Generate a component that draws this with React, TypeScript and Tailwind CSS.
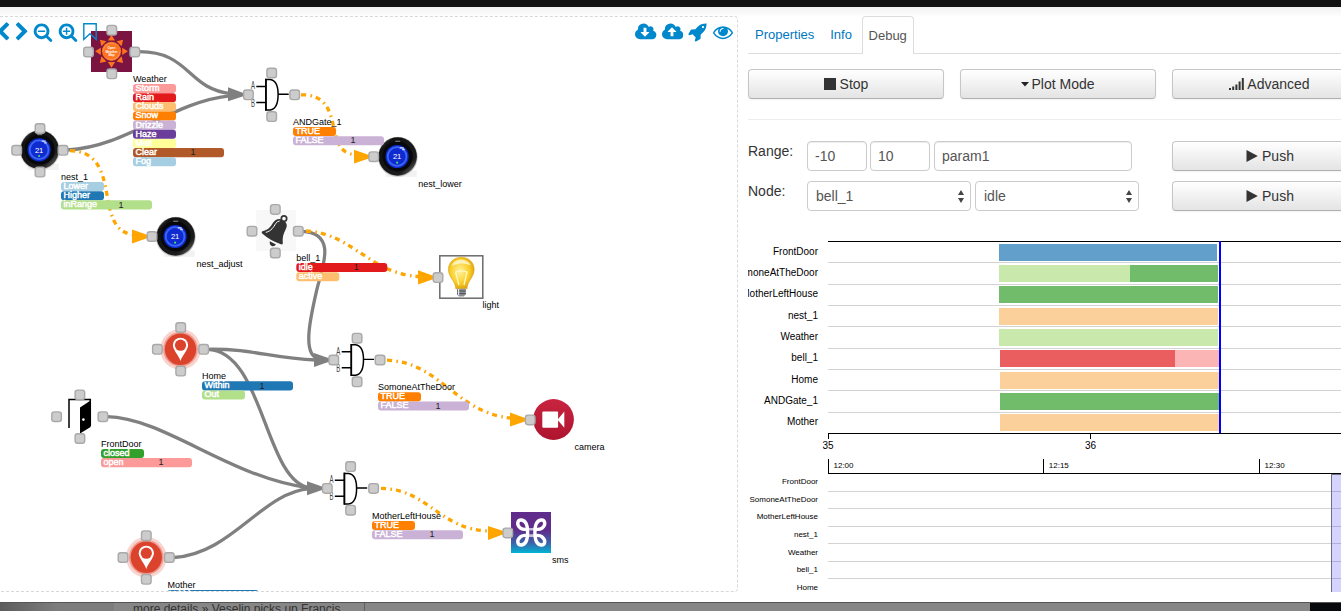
import React from "react";

const FONT = "font-['Liberation_Sans',Arial,sans-serif]";

/* ---------- toolbar glyphs ---------- */

const GLYPHS = {
  left: "M1427 301l-531 531 531 531q19 19 19 45t-19 45l-166 166q-19 19-45 19t-45-19l-742-742q-19-19-19-45t19-45l742-742q19-19 45-19t45 19l166 166q19 19 19 45t-19 45z",
  right: "M1363 877l-742 742q-19 19-45 19t-45-19l-166-166q-19-19-19-45t19-45l531-531-531-531q-19-19-19-45t19-45l166-166q19-19 45-19t45 19l742 742q19 19 19 45t-19 45z",
  zoomOut:
    "M1088 800v64q0 13-9.5 22.5t-22.5 9.5h-576q-13 0-22.5-9.5t-9.5-22.5v-64q0-13 9.5-22.5t22.5-9.5h576q13 0 22.5 9.5t9.5 22.5zm128 32q0-185-131.5-316.5t-316.5-131.5-316.5 131.5-131.5 316.5 131.5 316.5 316.5 131.5 316.5-131.5 131.5-316.5zm512 832q0 53-37.5 90.5t-90.5 37.5q-54 0-90-38l-343-342q-179 124-399 124-143 0-273.5-55.5t-225-150-150-225-55.5-273.5 55.5-273.5 150-225 225-150 273.5-55.5 273.5 55.5 225 150 150 225 55.5 273.5q0 220-124 399l343 343q37 37 37 90z",
  zoomIn:
    "M1088 800v64q0 13-9.5 22.5t-22.5 9.5h-224v224q0 13-9.5 22.5t-22.5 9.5h-64q-13 0-22.5-9.5t-9.5-22.5v-224h-224q-13 0-22.5-9.5t-9.5-22.5v-64q0-13 9.5-22.5t22.5-9.5h224v-224q0-13 9.5-22.5t22.5-9.5h64q13 0 22.5 9.5t9.5 22.5v224h224q13 0 22.5 9.5t9.5 22.5zm128 32q0-185-131.5-316.5t-316.5-131.5-316.5 131.5-131.5 316.5 131.5 316.5 316.5 131.5 316.5-131.5 131.5-316.5zm512 832q0 53-37.5 90.5t-90.5 37.5q-54 0-90-38l-343-342q-179 124-399 124-143 0-273.5-55.5t-225-150-150-225-55.5-273.5 55.5-273.5 150-225 225-150 273.5-55.5 273.5 55.5 225 150 150 225 55.5 273.5q0 220-124 399l343 343q37 37 37 90z",
  download:
    "M1280 928q0-14-9-23t-23-9h-224v-352q0-13-9.5-22.5t-22.5-9.5h-192q-13 0-22.5 9.5t-9.5 22.5v352h-224q-13 0-22.5 9.5t-9.5 22.5q0 14 9 23l352 352q9 9 23 9t23-9l351-351q10-12 10-24zm640 224q0 159-112.5 271.5t-271.5 112.5h-1088q-185 0-316.5-131.5t-131.5-316.5q0-130 70-240t188-165q-2-30-2-43 0-212 150-362t362-150q156 0 285.5 87t188.5 231q71-62 166-62 106 0 181 75t75 181q0 76-41 138 130 31 213.5 135.5t83.5 238.5z",
  upload:
    "M1280 864q0-14-9-23l-352-352q-9-9-23-9t-23 9l-351 351q-10 12-10 24 0 14 9 23t23 9h224v352q0 13 9.5 22.5t22.5 9.5h192q13 0 22.5-9.5t9.5-22.5v-352h224q13 0 22.5-9.5t9.5-22.5zm640 288q0 159-112.5 271.5t-271.5 112.5h-1088q-185 0-316.5-131.5t-131.5-316.5q0-130 70-240t188-165q-2-30-2-43 0-212 150-362t362-150q156 0 285.5 87t188.5 231q71-62 166-62 106 0 181 75t75 181q0 76-41 138 130 31 213.5 135.5t83.5 238.5z",
  rocket:
    "M1440 448q0-40-28-68t-68-28-68 28-28 68 28 68 68 28 68-28 28-68zm224-288q0 249-75.5 430.5t-253.5 360.5q-81 80-195 176l-20 379q-2 16-16 26l-384 224q-7 4-16 4-12 0-23-9l-64-64q-13-14-8-32l85-276-281-281-276 85q-3 1-9 1-14 0-23-9l-64-64q-17-19-5-39l224-384q10-14 26-16l379-20q96-114 176-195 188-187 358-258t431-71q14 0 24 9.5t10 22.5z",
  eye: "M1664 960q-152-236-381-353 61 104 61 225 0 185-131.5 316.5t-316.5 131.5-316.5-131.5-131.5-316.5q0-121 61-225-229 117-381 353 133 205 333.5 326.5t434.5 121.5 434.5-121.5 333.5-326.5zm-720-384q0-20-14-34t-34-14q-125 0-214.5 89.5t-89.5 214.5q0 20 14 34t34 14 34-14 14-34q0-86 61-147t147-61q20 0 34-14t14-34zm848 384q0 34-20 69-140 230-376.5 368.5t-499.5 138.5-499.5-139-376.5-368q-20-35-20-69t20-69q140-229 376.5-368t499.5-139 499.5 139 376.5 368q20 35 20 69z",
};

function Glyph({ name, wide = false, className = "" }: { name: keyof typeof GLYPHS; wide?: boolean; className?: string }) {
  return (
    <svg
      viewBox={wide ? "0 0 1920 1792" : "0 0 1792 1792"}
      className={`h-5 shrink-0 fill-[#0088cc] ${wide ? "w-[21.4px]" : "w-5"} ${className}`}
    >
      <path d={GLYPHS[name]} />
    </svg>
  );
}

/* ---------- diagram parts ---------- */

type Pt = [number, number];

function Ports({ at }: { at: Pt[] }) {
  return (
    <g fill="#cccccc" stroke="#a9a9a9" strokeWidth="1.4">
      {at.map(([x, y], i) => (
        <rect key={i} x={x - 4.8} y={y - 4.8} width="9.6" height="9.6" rx="2.6" />
      ))}
    </g>
  );
}

const cross = (x: number, y: number): Pt[] => [
  [x, y - 21.8],
  [x - 23.3, y],
  [x + 23, y],
  [x, y + 21.8],
];

function Thermostat({ x, y }: { x: number; y: number }) {
  return (
    <g transform={`translate(${x} ${y})`}>
      <rect x="-12" y="14" width="31" height="6.3" fill="#e6e6e6" opacity=".5" />
      <circle r="20" cy=".3" fill="#c9c9c9" />
      <circle r="19.2" fill="url(#rim)" />
      <circle r="15" fill="#07080c" />
      <rect x="-2.5" y="-15.8" width="5" height="1.2" fill="#777" />
      <circle cx="-.6" cy="0" r="11.6" fill="#0f2bd0" />
      <circle cx="-.6" cy="0" r="9.4" fill="none" stroke="#3c66f4" strokeWidth="1.8" />
      <path d="M2 -8.6h4M4.6 -7h2.4" stroke="#dbe3ff" strokeWidth="1.3" />
      <text x="-.6" y="2.8" fontSize="7.6" fill="#fff" textAnchor="middle">
        21
      </text>
      <circle cx="-.6" cy="6.2" r="1.1" fill="#3fdc6a" />
    </g>
  );
}

function Gate({ x, y }: { x: number; y: number }) {
  return (
    <g transform={`translate(${x} ${y})`} fill="none" stroke="#000">
      <path d="M-5.8 -15.2H-1.5C4 -14.5 6.4 -8 6.4 -.2S4 14.4 -1.5 15.3H-5.8Z" fill="#fff" strokeWidth="1.5" />
      <path d="M-5.8 -16V16" strokeWidth="1.6" />
      <path d="M-15.4 -8.3H-6M-15.4 7.7H-6M6.4 -.6H17" strokeWidth="1.4" />
      <g stroke="none" fill="#444" fontSize="10">
        <text transform="translate(-20.8 -5.4) scale(.6 1)">A</text>
        <text transform="translate(-20.8 11.8) scale(.6 1)">B</text>
      </g>
    </g>
  );
}

function Place({ x, y }: { x: number; y: number }) {
  return (
    <g transform={`translate(${x} ${y})`}>
      <circle r="20.3" fill="#f9d3ce" />
      <circle r="17.3" fill="#ee9a8f" />
      <circle r="15.7" fill="#dc432c" />
      <path d="M0 11.6C-1.8 6 -7.6 1 -7.6 -4.2A7.6 7.4 0 0 1 7.6 -4.2C7.6 1 1.8 6 0 11.6Z" fill="#fff" />
      <circle cy="-4.1" r="5.6" fill="#dc432c" />
    </g>
  );
}

function Sun() {
  const rays = [0, 45, 90, 135, 180, 225, 270, 315];
  return (
    <g>
      <rect x="91" y="31" width="41" height="41" fill="#7b1440" />
      <g transform="translate(111.5 51.3)">
        {rays.map((a) => (
          <path key={a} d="M-3.6 -10.7L0 -16.4L3.6 -10.7Z" fill="#fc7320" transform={`rotate(${a})`} />
        ))}
        <circle r="9.6" fill="#fc7320" />
        <circle r="8.2" fill="none" stroke="#ff9c66" strokeWidth=".8" strokeDasharray="18 8" />
        <g fill="#fff" fontSize="3.1" fontWeight="bold" textAnchor="middle">
          <text y="-2.2">Open</text>
          <text y="1.2">Weather</text>
          <text y="4.6">Map</text>
        </g>
      </g>
    </g>
  );
}

type State = { name: string; color: string; on?: boolean };

function StateLabel({ x, y, title, states }: { x: number; y: number; title: string; states: State[] }) {
  return (
    <g fontSize="9">
      <text x={x} y={y}>
        {title}
      </text>
      {states.map((s, i) => {
        const top = y + 2.3 + i * 9.15;
        return (
          <g key={s.name}>
            <rect x={x} y={top} width={s.on ? 91 : 43} height="9.1" rx="3" fill={s.color} />
            <text x={x + 2.4} y={top + 7} fill="#fff" stroke="#fff" strokeWidth=".45">
              {s.name}
            </text>
            {s.on && (
              <text x={x + 57.5} y={top + 7.2} fill="#222">
                1
              </text>
            )}
          </g>
        );
      })}
    </g>
  );
}

const gateStates: State[] = [
  { name: "TRUE", color: "#ff7f00" },
  { name: "FALSE", color: "#cab2d6", on: true },
];

const solid = [
  "M138 51.7C190 51 187 89 231 93.6",
  "M67 150C128 147 170 102 231 95.6",
  "M302 231.3C338 233 322 268 317 289C311 315 301 356 319 358.5",
  "M207 349.3C255 348.5 270 358.5 316 360",
  "M207 349.3C264 350 264 481 310 488",
  "M107 416.7C165 418 230 478 310 488",
  "M174 557.5C232 554 262 492 310 488.6",
];
const dashed = [
  "M70 150.6C124 152 92 230 133 234.5",
  "M301 94.8C348 94 321 154 356 154.5",
  "M306 231C352 233 370 274 419 276.5",
  "M387 360.2C440 362 456 413 511 418",
  "M381 488.3C428 489 440 530 489 531",
];
const solidTips = ["228,87.3 228,101.3 248,94.8", "314,353 314,367 334,360", "307,481.2 307,495.2 327,488.2"];
const dashedTips = [
  "132,229.6 132,243.6 152,236.5",
  "354,149.8 354,163.6 374,156.8",
  "418,270.2 418,284.6 438,277.5",
  "510,412.6 510,426.6 530,419.8",
  "488,526 488,540 508,532.6",
];

function Diagram() {
  return (
    <svg viewBox="0 17 737 574" className="block h-[574px] w-[737px]" fontFamily="Liberation Sans, Arial, sans-serif">
      <defs>
        <linearGradient id="rim" x1="0" y1="0" x2="1" y2="1">
          <stop offset="0" stopColor="#8b8b8b" />
          <stop offset=".2" stopColor="#111" />
          <stop offset=".75" stopColor="#1c1c1c" />
          <stop offset="1" stopColor="#8a8a8a" />
        </linearGradient>
        <linearGradient id="sms" x1="0" y1="0" x2="0" y2="1">
          <stop offset=".45" stopColor="#5f2c8c" />
          <stop offset=".75" stopColor="#3d62a8" />
          <stop offset="1" stopColor="#00b4d4" />
        </linearGradient>
        <linearGradient id="cam" x1="0" y1="0" x2="0" y2="1">
          <stop offset="0" stopColor="#c8243f" />
          <stop offset="1" stopColor="#ae142f" />
        </linearGradient>
        <radialGradient id="bulb" cx=".45" cy=".45" r=".6">
          <stop offset="0" stopColor="#fff3a0" />
          <stop offset=".6" stopColor="#f9cf2c" />
          <stop offset="1" stopColor="#dd9a08" />
        </radialGradient>
      </defs>

      {/* node pictures */}
      <Sun />
      <Thermostat x={39.7} y={149.8} />
      <Thermostat x={397.7} y={156.5} />
      <Thermostat x={175.7} y={236.5} />
      <Gate x={271.7} y={94.8} />
      <Gate x={357.1} y={360} />
      <Gate x={350.2} y={488.6} />
      <Place x={180.5} y={349.3} />
      <Place x={146.3} y={557.3} />

      <g>
        <rect x="256" y="210" width="40" height="41" fill="#f8f8f8" />
        <circle cx="284" cy="218.6" r="2.7" fill="none" stroke="#333" strokeWidth="1.7" />
        <path
          d="M262.3 231.2C268 230.4 270.5 227 273 222.8C275.5 219 279.5 217.8 283 220.4C287.6 222.6 287.4 226 285.6 229.6C283.4 234 282.2 237.6 282.8 243.2Q282.6 244.8 281 244.3Q270.5 241 262.2 233.6Q261 232 262.3 231.2Z"
          fill="#333"
        />
        <path d="M265.8 232.4C271.4 231 273.6 227 275.8 223.4Q277.4 221.2 279.6 221" fill="none" stroke="#fff" strokeWidth="1" />
        <path d="M269.8 241.2L276 244.6Q274.6 246.6 272.2 246.2Q269.2 245 269.8 241.2Z" fill="#333" />
      </g>

      <g>
        <rect x="439.8" y="255.8" width="43" height="42.4" fill="#fff" stroke="#6b6b6b" strokeWidth="1.5" />
        <path
          d="M461.3 257.2C468.6 257.2 474.2 262.6 474.2 269.4C474.2 277.4 467.3 280.6 467 288.8H455.8C455.4 280.6 448.4 277.4 448.4 269.4C448.4 262.6 454 257.2 461.3 257.2Z"
          fill="url(#bulb)"
          stroke="#dca31a"
          strokeWidth=".6"
        />
        <path d="M451.5 266Q454 259.6 461 259.4Q468 259.6 471 265.6Q461 261 451.5 266Z" fill="#fffbe0" opacity=".75" />
        <path d="M455.6 272Q461 269.6 467 272L464 285M455.6 272L459 285" fill="none" stroke="#fff8c4" strokeWidth="1.3" />
        <path d="M457 288.8h8.8v5.4l-2 2.2h-4.8l-2-2.2z" fill="#8b8f94" />
        <path d="M457 291h8.8M457 293.6h8.8" stroke="#3c3f43" strokeWidth=".8" />
        <path d="M458.6 289v6" stroke="#e8e8e8" strokeWidth="1.2" />
      </g>

      <g>
        <path d="M69 428V399.6H90.3V426" fill="none" stroke="#000" strokeWidth="1.5" />
        <path d="M80 407.6L90.6 400.4V427L80 433.6Z" fill="#000" />
        <circle cx="83.4" cy="419.6" r="1.3" fill="#fff" />
      </g>

      <g>
        <circle cx="553.5" cy="419.5" r="20.4" fill="url(#cam)" />
        <rect x="542.3" y="411.5" width="15.8" height="16.2" rx="1" fill="#fff" />
        <path d="M557.5 419.7L564.3 411.6V427.7Z" fill="#fff" />
      </g>

      <g>
        <rect x="511" y="512" width="40" height="41" fill="url(#sms)" />
        <g fill="none" strokeLinecap="round">
          <path d="M524 529.2H538M524 535.6H538" stroke="#c9bbe0" strokeWidth="2.6" />
          <path
            d="M520.5 528.2C516 524.5 517.5 519.6 521.6 520C526.5 520.6 527.6 527 527.6 532.5S526.5 544.4 521.6 545C517.5 545.4 516 540.4 520.5 536.8Q522.5 535.6 525 535.4M520.5 528.2Q522.5 529.4 525 529.4"
            stroke="#fff"
            strokeWidth="3.4"
          />
          <path
            d="M542 528.2C546.5 524.5 545 519.6 540.9 520C536 520.6 534.9 527 534.9 532.5S536 544.4 540.9 545C545 545.4 546.5 540.4 542 536.8Q540 535.6 537.5 535.4M542 528.2Q540 529.4 537.5 529.4"
            stroke="#fff"
            strokeWidth="3.4"
          />
        </g>
      </g>

      {/* links */}
      <g fill="none" stroke="#808080" strokeWidth="3.3">
        {solid.map((d) => (
          <path key={d} d={d} />
        ))}
      </g>
      <g fill="none" stroke="#ffa500" strokeWidth="3.3" strokeDasharray="5 4.4 1.6 4">
        {dashed.map((d) => (
          <path key={d} d={d} />
        ))}
      </g>
      <g fill="#808080">
        {solidTips.map((p) => (
          <polygon key={p} points={p} />
        ))}
      </g>
      <g fill="#ffa500">
        {dashedTips.map((p) => (
          <polygon key={p} points={p} />
        ))}
      </g>

      <Ports at={cross(111.8, 52)} />
      <Ports at={cross(40, 150.3)} />
      <Ports at={cross(271.7, 94.8)} />
      <Ports at={cross(275.3, 231.2)} />
      <Ports at={cross(180.7, 349.3)} />
      <Ports at={cross(79.9, 416.7)} />
      <Ports at={cross(357.1, 360)} />
      <Ports at={cross(350.6, 488.4)} />
      <Ports at={cross(146.3, 557.5)} />
      <Ports
        at={[
          [373.7, 156.7],
          [152, 236.5],
          [438, 277.6],
          [530.2, 419.9],
          [507.8, 532.9],
        ]}
      />

      {/* captions */}
      <StateLabel
        x={133}
        y={81.7}
        title="Weather"
        states={[
          { name: "Storm", color: "#fb9a99" },
          { name: "Rain", color: "#e31a1c" },
          { name: "Clouds", color: "#fdbf6f" },
          { name: "Snow", color: "#ff7f00" },
          { name: "Drizzle", color: "#cab2d6" },
          { name: "Haze", color: "#6a3d9a" },
          { name: "Mist", color: "#ffff99" },
          { name: "Clear", color: "#b15928", on: true },
          { name: "Fog", color: "#a6cee3" },
        ]}
      />
      <StateLabel
        x={61}
        y={179.7}
        title="nest_1"
        states={[
          { name: "Lower", color: "#a6cee3" },
          { name: "Higher", color: "#1f78b4" },
          { name: "inRange", color: "#b2df8a", on: true },
        ]}
      />
      <StateLabel x={293} y={124.7} title="ANDGate_1" states={gateStates} />
      <StateLabel
        x={296.3}
        y={260.7}
        title="bell_1"
        states={[
          { name: "idle", color: "#e31a1c", on: true },
          { name: "active", color: "#fdbf6f" },
        ]}
      />
      <StateLabel
        x={202}
        y={379}
        title="Home"
        states={[
          { name: "Within", color: "#1f78b4", on: true },
          { name: "Out", color: "#b2df8a" },
        ]}
      />
      <StateLabel
        x={101}
        y={446.6}
        title="FrontDoor"
        states={[
          { name: "closed", color: "#33a02c" },
          { name: "open", color: "#fb9a99", on: true },
        ]}
      />
      <StateLabel x={378} y={390} title="SomoneAtTheDoor" states={gateStates} />
      <StateLabel x={372} y={518.7} title="MotherLeftHouse" states={gateStates} />
      <StateLabel x={167.5} y={587.6} title="Mother" states={[{ name: "Within", color: "#1f78b4", on: true }]} />
      <g fontSize="9">
        <text x="418.3" y="186.7">nest_lower</text>
        <text x="196.5" y="267">nest_adjust</text>
        <text x="482.5" y="308">light</text>
        <text x="574.6" y="450">camera</text>
        <text x="552" y="563">sms</text>
      </g>
    </svg>
  );
}

/* ---------- timeline chart ---------- */

const BLUE = "#629fca";
const LIME = "#c9e8ac";
const GREEN = "#70bc6b";
const SAND = "#fbd09a";

const rows: { name: string; y: number; bars: [number, number, string][] }[] = [
  { name: "FrontDoor", y: 244, bars: [[999, 1217, BLUE]] },
  { name: "SomoneAtTheDoor", y: 265, bars: [[999, 1130, LIME], [1130, 1218, GREEN]] },
  { name: "MotherLeftHouse", y: 286, bars: [[999, 1218, GREEN]] },
  { name: "nest_1", y: 308, bars: [[999, 1218, SAND]] },
  { name: "Weather", y: 329, bars: [[999, 1218, LIME]] },
  { name: "bell_1", y: 350, bars: [[1000, 1175, "#eb5e60"], [1175, 1219, "#fbb5b5"]] },
  { name: "Home", y: 372, bars: [[1000, 1219, SAND]] },
  { name: "ANDGate_1", y: 393, bars: [[1000, 1219, GREEN]] },
  { name: "Mother", y: 414, bars: [[1000, 1219, SAND]] },
];
const separators = [262, 284, 305, 326, 348, 369, 390, 412];
const miniSeparators = [491, 508, 526, 543, 561, 578];
const miniBaselines = [484, 502, 519, 537, 555, 572, 590];

function Timeline() {
  return (
    <svg viewBox="748 230 593 362" className="block h-[362px] w-[593px]" fontFamily="Liberation Sans, Arial, sans-serif">
      <g fill="#d3d3d3">
        {separators.map((y) => (
          <rect key={y} x="828" y={y} width="513" height="1" />
        ))}
        {miniSeparators.map((y) => (
          <rect key={y} x="828" y={y} width="513" height="1" />
        ))}
      </g>
      {rows.map((r) => (
        <g key={r.name}>
          <text x="818" y={r.y + 11} fontSize="10" textAnchor="end">
            {r.name}
          </text>
          {r.bars.map(([a, b, c]) => (
            <rect key={a} x={a} y={r.y} width={b - a} height="17" fill={c} />
          ))}
        </g>
      ))}
      <rect x="828" y="241" width="513" height="1" />
      <path d="M828 433h513v1H829v5h-1zM1090 434h1v5h-1z" />
      <rect x="1219" y="241" width="2" height="192" fill="#0000ff" />
      <g fontSize="10" textAnchor="middle">
        <text x="828" y="449">35</text>
        <text x="1090.5" y="449">36</text>
      </g>
      <path d="M828 459h1v14h512v1H828zM1043 459h1v14h-1zM1259 459h1v14h-1z" />
      <g fontSize="8">
        <text x="833.5" y="468">12:00</text>
        <text x="1048.8" y="468">12:15</text>
        <text x="1264.6" y="468">12:30</text>
      </g>
      <g fontSize="8" textAnchor="end">
        {miniBaselines.map((y, i) => (
          <text key={y} x="818" y={y}>
            {rows[i].name}
          </text>
        ))}
      </g>
      <rect x="1331" y="474" width="10" height="118" fill="#0000ff" opacity=".17" />
      <path d="M1331 474h10v1h-9v117h-1z" fill="#6f6f80" />
    </svg>
  );
}

/* ---------- form controls ---------- */

function Button({ children }: { children: React.ReactNode }) {
  return (
    <button className="flex h-[30px] w-[196px] shrink-0 items-center justify-center gap-1 rounded border border-[#c6c6c6] border-b-[#b0b0b0] bg-gradient-to-b from-white to-[#e4e4e4] text-sm text-[#333] shadow-[0_1px_2px_rgba(0,0,0,0.05)]">
      {children}
    </button>
  );
}

function Field({ className, children }: { className: string; children: React.ReactNode }) {
  return (
    <div className={`flex h-[30px] shrink-0 items-center rounded border border-[#ccc] bg-white pl-[7px] text-sm text-[#555] shadow-[inset_0_1px_1px_rgba(0,0,0,0.075)] ${className}`}>
      {children}
    </div>
  );
}

function Select({ children }: { children: React.ReactNode }) {
  return (
    <div className="flex h-[30px] w-[164px] shrink-0 items-center justify-between rounded border border-[#ccc] bg-white pr-[6px] pl-2 text-sm text-[#555]">
      {children}
      <svg viewBox="0 0 6 13" className="h-[13px] w-[6px] fill-[#444]">
        <path d="M3 0L6 5H0ZM3 13L0 8H6Z" />
      </svg>
    </div>
  );
}

function PlayIcon() {
  return (
    <svg viewBox="0 0 12 12" className="h-3 w-3 fill-[#333]">
      <path d="M.5 0L11.8 6L.5 12Z" />
    </svg>
  );
}

function DebugPanel() {
  return (
    <aside className="flex w-[603px] shrink-0 flex-col pt-[9px] pl-[10px]">
      <nav className="flex h-[38px] w-[640px] items-end border-b border-[#ddd] text-[13px] text-[#0077c0]">
        <a className="mr-[2px] flex h-[38px] items-center px-[7px] pt-[2px]">Properties</a>
        <a className="mr-[2.6px] flex h-[38px] items-center px-[7px] pt-[2px]">Info</a>
        <a className="-mb-px flex h-[38px] items-center rounded-t border border-b-0 border-[#ddd] bg-white px-[6px] text-[#555]">Debug</a>
      </nav>

      <div className="mt-[15px] flex gap-4">
        <Button>
          <span className="h-3 w-3 bg-[#333]" />
          Stop
        </Button>
        <Button>
          <svg viewBox="0 0 8 5" className="h-[5px] w-2 fill-[#222]">
            <path d="M0 0H8L4 4.6Z" />
          </svg>
          <span className="-ml-[2px]">Plot Mode</span>
        </Button>
        <Button>
          <svg viewBox="0 0 15 12" className="h-3 w-[15px] -translate-x-px fill-[#333]">
            <path d="M0 10h2v2H0zM3.2 8.6h2V12h-2zM6.4 6.4h2V12h-2zM9.6 3.4h2V12h-2zM12.8 0h2v12h-2z" />
          </svg>
          <span className="-ml-[2px]">Advanced</span>
        </Button>
      </div>

      <div className="mt-5 h-px w-[640px] bg-[#eee]" />

      <div className="mt-[21px] flex">
        <div className="w-[59px] shrink-0 text-sm leading-5 text-[#333]">Range:</div>
        <Field className="mr-[3px] w-[60px]">-10</Field>
        <Field className="mr-1 w-[60px]">10</Field>
        <Field className="mr-10 w-[198px]">param1</Field>
        <Button>
          <PlayIcon />
          Push
        </Button>
      </div>
      <div className="mt-[10px] flex">
        <div className="w-[59px] shrink-0 text-sm leading-5 text-[#333]">Node:</div>
        <div className="mr-[33px] flex gap-1">
          <Select>bell_1</Select>
          <Select>idle</Select>
        </div>
        <Button>
          <PlayIcon />
          Push
        </Button>
      </div>
      <div className="mt-[19px]">
        <Timeline />
      </div>
    </aside>
  );
}

export default function App() {
  return (
    <div className={`flex h-[611px] w-[1341px] flex-col overflow-hidden bg-white ${FONT}`}>
      <div className="h-[7px] shrink-0 bg-[#121212]" />
      <main className="flex h-[595px] shrink-0 overflow-hidden bg-white bg-[linear-gradient(to_bottom,#f1f1f1,#ffffff_10px)]">
        <section className="w-[738px] shrink-0 pt-[9px]">
          <div className="relative h-[576px] rounded-r border border-l-0 border-dashed border-[#d8d8d8] bg-white">
            <Diagram />
            <div className="absolute inset-x-0 top-[4.6px] flex h-5 justify-between pr-1">
              <div className="flex">
                <Glyph name="left" className="-ml-[7px]" />
                <Glyph name="right" className="-ml-px" />
                <Glyph name="zoomOut" className="ml-[1.3px]" />
                <Glyph name="zoomIn" className="ml-[5px]" />
                <svg viewBox="0 0 14 18" className="ml-[5px] h-[18px] w-[14px] translate-y-px fill-none stroke-[#0088cc] [stroke-width:1.4]">
                  <path d="M.8 .8H13.2V16.4L7 10.8L.8 16.4Z" />
                </svg>
              </div>
              <div className="flex gap-[5px]">
                <Glyph name="download" wide />
                <Glyph name="upload" wide />
                <Glyph name="rocket" />
                <Glyph name="eye" />
              </div>
            </div>
          </div>
        </section>
        <DebugPanel />
      </main>
      <footer className="flex h-[9px] shrink-0 overflow-hidden border-t border-[#555] bg-[#868686] text-xs leading-3 text-[#333]">
        <div className="w-[114px] shrink-0 bg-gradient-to-r from-[#5c5c5c] via-[#7d7d7d] to-[#7d7d7d]" />
        <div className="w-[251px] shrink-0 border-r border-[#5f5f5f] pl-[19px] whitespace-nowrap">
          more details » Veselin picks up Francis
        </div>
        <div className="grow" />
        <div className="w-[31px] shrink-0 bg-[#07090d]" />
      </footer>
    </div>
  );
}
